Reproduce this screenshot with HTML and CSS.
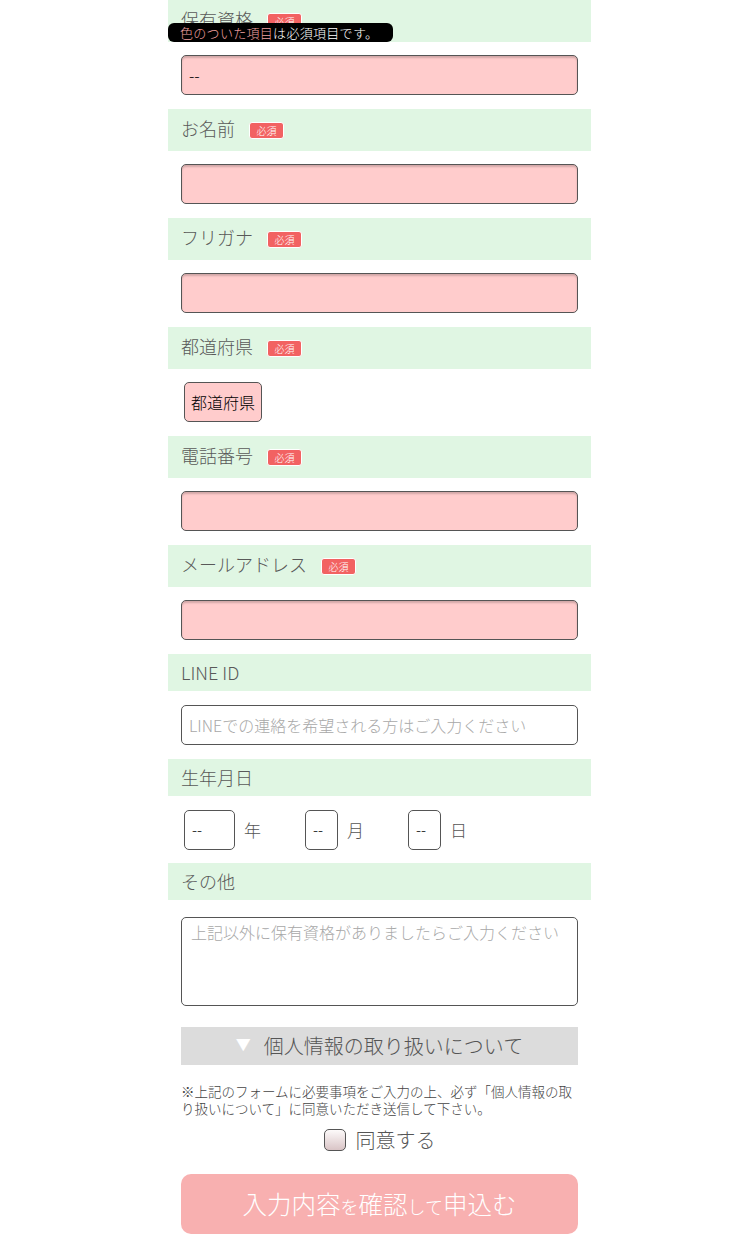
FILE: index.html
```html
<!DOCTYPE html>
<html lang="ja">
<head>
<meta charset="utf-8">
<title>フォーム</title>
<link rel="stylesheet" href="styles.css">
</head>
<body>
<div class="form">
  <div class="tip"><span class="tip-pink">色のついた項目</span>は必須項目です。</div>

  <div class="head req"><span class="label">保有資格</span><span class="badge">必須</span></div>
  <div class="body"><div class="input req-bg"><span class="val">--</span></div></div>

  <div class="head req"><span class="label">お名前</span><span class="badge">必須</span></div>
  <div class="body"><div class="input req-bg"></div></div>

  <div class="head req"><span class="label">フリガナ</span><span class="badge">必須</span></div>
  <div class="body"><div class="input req-bg"></div></div>

  <div class="head req"><span class="label">都道府県</span><span class="badge">必須</span></div>
  <div class="body"><div class="select">都道府県</div></div>

  <div class="head req"><span class="label">電話番号</span><span class="badge">必須</span></div>
  <div class="body"><div class="input req-bg"></div></div>

  <div class="head req"><span class="label">メールアドレス</span><span class="badge">必須</span></div>
  <div class="body"><div class="input req-bg"></div></div>

  <div class="head"><span class="label">LINE ID</span></div>
  <div class="body opt"><div class="input plain"><span class="ph">LINEでの連絡を希望される方はご入力ください</span></div></div>

  <div class="head"><span class="label">生年月日</span></div>
  <div class="body opt date-row">
    <div class="dbox year">--</div><span class="dunit">年</span>
    <div class="dbox md">--</div><span class="dunit">月</span>
    <div class="dbox md">--</div><span class="dunit">日</span>
  </div>

  <div class="head"><span class="label">その他</span></div>
  <div class="body other"><div class="textarea"><span class="ph">上記以外に保有資格がありましたらご入力ください</span></div></div>

  <div class="privacy"><span class="tri">▼</span>個人情報の取り扱いについて</div>

  <p class="note">※上記のフォームに必要事項をご入力の上、必ず「個人情報の取り扱いについて」に同意いただき送信して下さい。</p>

  <div class="agree"><span class="check"></span><span class="agree-label">同意する</span></div>

  <div class="submit"><span class="big">入力内容</span><span class="small">を</span><span class="big">確認</span><span class="small">して</span><span class="big">申込む</span></div>
</div>
</body>
</html>
```

FILE: styles.css
```css
html, body {
  margin: 0;
  padding: 0;
  background: #fff;
}
body {
  font-family: "Noto Sans CJK JP", "Noto Sans", sans-serif;
  font-weight: 300;
  color: #555;
}
.form {
  position: relative;
  width: 423px;
  margin-left: 168px;
  margin-top: -0.5px;
}
.tip {
  position: absolute;
  left: 0;
  top: 23.5px;
  width: 213px;
  height: 19px;
  padding-left: 12px;
  background: #000;
  color: #fff;
  border-radius: 6px;
  font-size: 13px;
  line-height: 19px;
  z-index: 2;
  letter-spacing: 0.3px;
}
.tip-pink {
  color: #f2a0a0;
}
.head {
  box-sizing: border-box;
  display: flex;
  align-items: center;
  background: #e0f6e3;
  padding: 0 13px 1px;
  height: 37px;
}
.head.req {
  height: 42px;
  padding-bottom: 4px;
}
.label {
  font-size: 18px;
  line-height: 22px;
  color: #595959;
}
.badge {
  margin-left: 14px;
  margin-top: 5px;
  background: #f26262;
  color: #fff;
  border: 1px solid #fff;
  border-radius: 3px;
  font-size: 10px;
  line-height: 15px;
  width: 33px;
  text-align: center;
}
.body {
  padding: 13px 13px 14px;
}
.body.opt {
  padding-top: 14px;
}
.body.date-row {
  padding-bottom: 13px;
}
.input {
  box-sizing: border-box;
  height: 40px;
  border: 1px solid #555;
  border-radius: 5px;
  display: flex;
  align-items: center;
  padding-left: 7px;
}
.req-bg {
  background: #ffcccc;
  box-shadow: inset 0 2px 2px rgba(0, 0, 0, 0.18);
}
.plain {
  background: #fff;
}
.val {
  color: #000;
  font-size: 16px;
}
.ph {
  color: #a8a8a8;
  font-size: 16px;
}
.select {
  box-sizing: border-box;
  margin-left: 3px;
  width: 78px;
  height: 40px;
  border: 1px solid #555;
  border-radius: 5px;
  background: #ffcccc;
  color: #000;
  font-size: 16px;
  display: flex;
  align-items: center;
  justify-content: center;
}
.date-row {
  display: flex;
  align-items: center;
}
.dbox {
  box-sizing: border-box;
  height: 40px;
  border: 1px solid #555;
  border-radius: 5px;
  background: #fff;
  color: #000;
  font-size: 15px;
  display: flex;
  align-items: center;
  padding-left: 7px;
}
.dbox.year {
  margin-left: 3px;
  width: 51px;
}
.dbox.md {
  width: 33px;
}
.dunit {
  font-size: 17px;
  color: #555;
  margin-left: 9px;
  width: 61px;
}
.body.other {
  padding-top: 17px;
  padding-bottom: 21px;
}
.textarea {
  box-sizing: border-box;
  height: 89px;
  border: 1px solid #555;
  border-radius: 5px;
  background: #fff;
  padding: 3px 9px;
  line-height: 22px;
}
.privacy {
  margin: 0 13px;
  height: 38px;
  background: #dcdcdc;
  display: flex;
  align-items: center;
  justify-content: center;
  font-size: 20px;
  color: #555;
}
.tri {
  color: #fff;
  font-size: 15px;
  margin-right: 13px;
  margin-top: -4px;
}
.note {
  margin: 18px 13px 0;
  font-size: 13.5px;
  line-height: 17px;
  color: #444;
}
.agree {
  display: flex;
  align-items: center;
  justify-content: center;
  margin-top: 11px;
  height: 24px;
}
.check {
  box-sizing: border-box;
  width: 22px;
  height: 22px;
  border: 1px solid #555;
  border-radius: 5px;
  background: linear-gradient(#fdfafa, #d9c4c6);
}
.agree-label {
  margin-left: 10px;
  font-size: 20px;
  color: #555;
}
.submit {
  margin: 22px 13px 0;
  height: 60px;
  border-radius: 10px;
  background: #f8b0b0;
  color: #fff;
  display: flex;
  align-items: center;
  justify-content: center;
}
.big {
  font-size: 24.5px;
}
.small {
  font-size: 18px;
  margin-top: 4px;
}
```
